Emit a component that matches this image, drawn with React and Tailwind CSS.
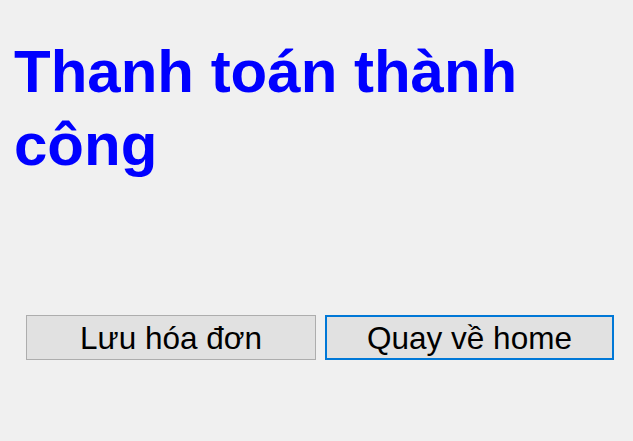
export default function App() {
  return (
    <div className="w-[633px] h-[441px] bg-[#f0f0f0] overflow-hidden font-['Liberation_Sans',Arial,sans-serif]">
      <h1 className="pt-[35px] pl-[14px] text-[60px] leading-[73px] font-bold text-[#0000ff]">
        Thanh toán thành công
      </h1>
      <div className="flex gap-[9px] pl-[26px] mt-[134px]">
        <button className="w-[290px] h-[45px] pt-[2px] bg-[#e1e1e1] border border-[#adadad] text-[31.5px] leading-none text-black">
          Lưu hóa đơn
        </button>
        <button className="w-[289px] h-[45px] pt-[2px] bg-[#e1e1e1] border-2 border-[#0078d7] text-[31.5px] leading-none text-black">
          Quay về home
        </button>
      </div>
    </div>
  );
}
